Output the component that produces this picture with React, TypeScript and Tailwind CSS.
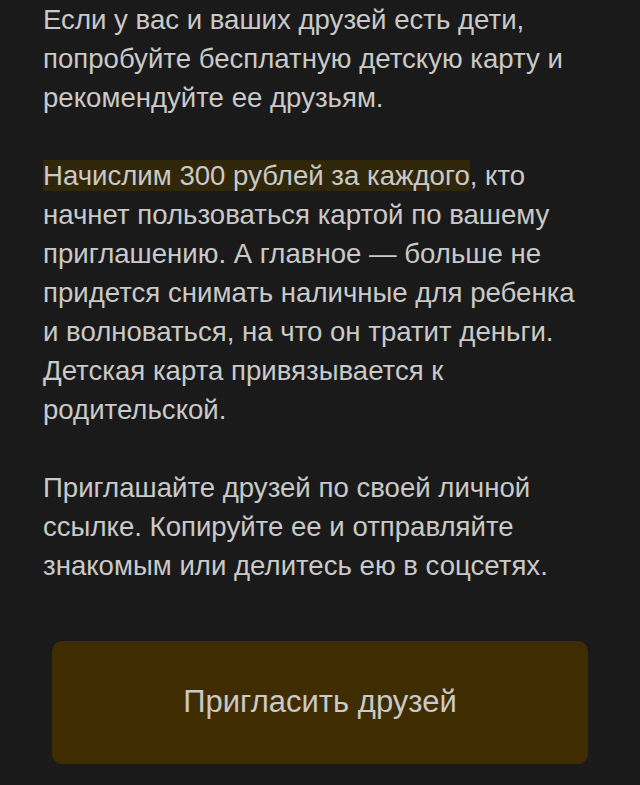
export default function App() {
  return (
    <div className="min-h-[785px] bg-[#1a1a1a] font-['Liberation_Sans'] text-[#c9c9c9]">
      <div className="px-[43px] text-[27.6px] leading-[39px]">
        <p>
          Если у вас и ваших друзей есть дети, попробуйте бесплатную детскую
          карту и рекомендуйте ее друзьям.
        </p>
        <p className="mt-[39px]">
          <span className="bg-[#30260a]">Начислим 300 рублей за каждого</span>,
          кто начнет пользоваться картой по вашему приглашению. А главное —
          больше не придется снимать наличные для ребенка и волноваться, на что
          он тратит деньги. Детская карта привязывается к родительской.
        </p>
        <p className="mt-[39px]">
          Приглашайте друзей по своей личной ссылке. Копируйте ее и отправляйте
          знакомым или делитесь ею в соцсетях.
        </p>
      </div>
      <div className="px-[52px] pt-[56px]">
        <button
          type="button"
          className="flex h-[123px] w-full items-center justify-center rounded-[10px] bg-[#3f2c00] text-[31px] text-[#c9c9c9]"
        >
          Пригласить друзей
        </button>
      </div>
    </div>
  );
}
